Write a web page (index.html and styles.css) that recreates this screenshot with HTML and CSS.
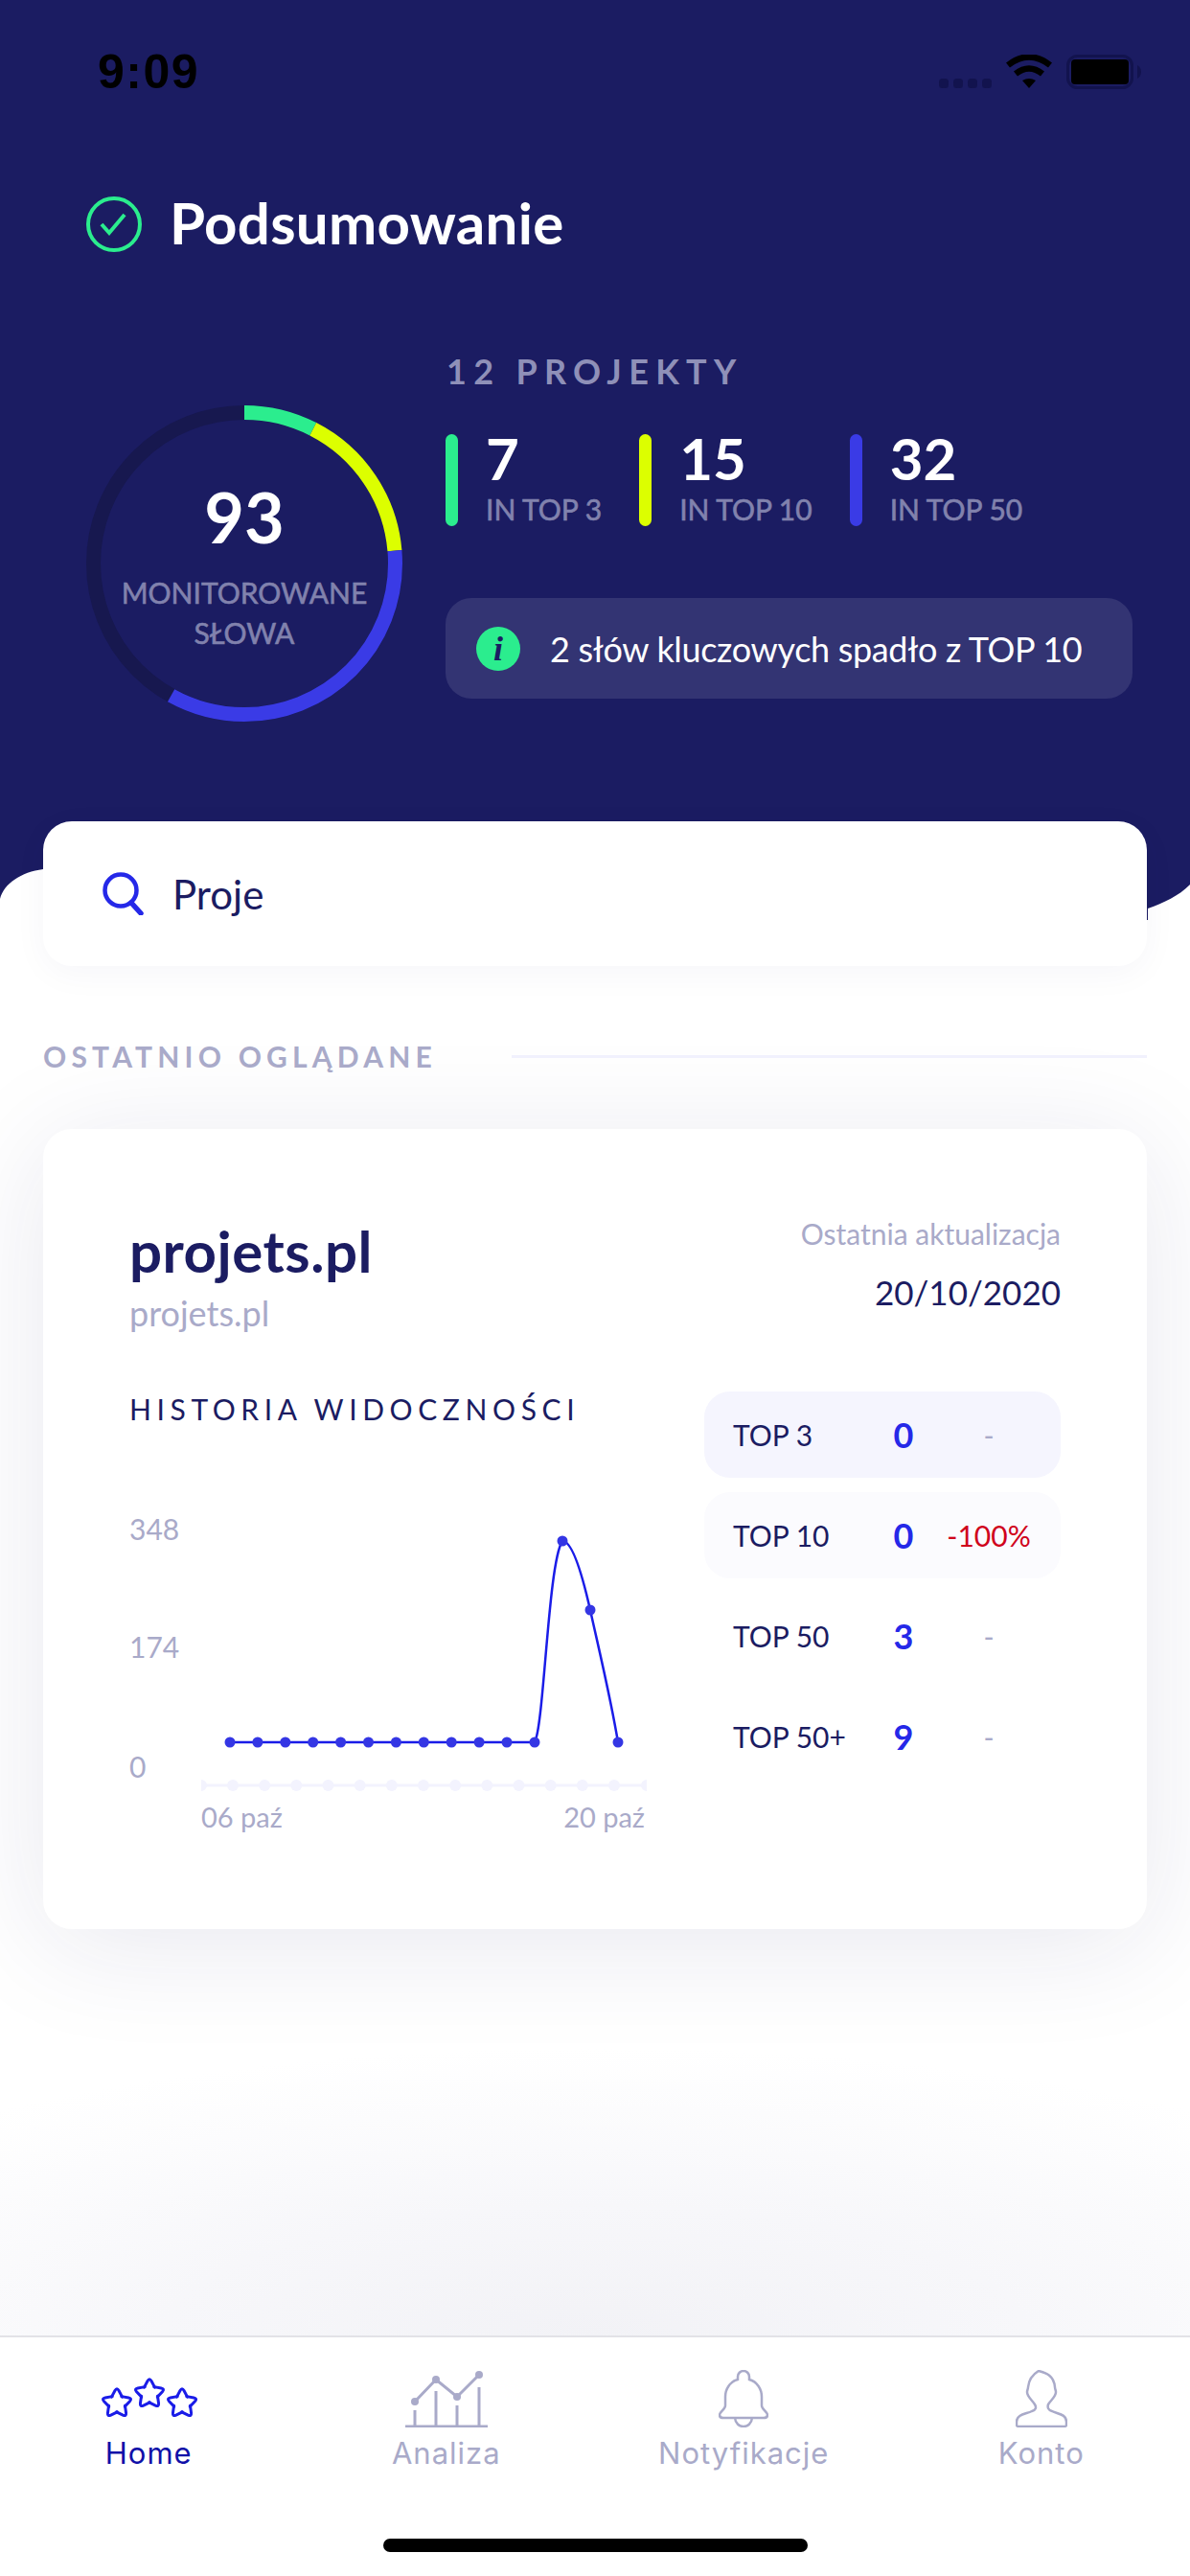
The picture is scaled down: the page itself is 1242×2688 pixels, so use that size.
FILE: index.html
```html
<!DOCTYPE html>
<html lang="pl">
<head>
<meta charset="utf-8">
<title>Podsumowanie</title>
<link rel="stylesheet" href="styles.css">
</head>
<body>
<div class="screen">
  <header class="hero">
    <div class="status">
      <span class="clock">9:09</span>
      <svg class="status-icons" width="211" height="36" viewBox="0 0 211 36">
        <g fill="#12134e">
          <rect x="0" y="25" width="10" height="10" rx="3.5"/><rect x="15" y="25" width="10" height="10" rx="3.5"/>
          <rect x="30" y="25" width="10" height="10" rx="3.5"/><rect x="45" y="25" width="10" height="10" rx="3.5"/>
        </g>
        <path d="M72 11Q94 -6 116 11" fill="none" stroke="#000" stroke-width="6.5"/>
        <path d="M80 20Q94 9 108 20" fill="none" stroke="#000" stroke-width="6.5"/>
        <path d="M87 27Q94 23 101 27L94 35Z" fill="#000"/>
        <rect x="134.500" y="1.500" width="67" height="33" rx="10" fill="none" stroke="#12134e" stroke-width="3"/>
        <rect x="138" y="5" width="60" height="26" rx="4" fill="#000"/>
        <path d="M207 11C210 13 211 15 211 18C211 21 210 23 207 25Z" fill="#12134e"/>
      </svg>
    </div>
    <div class="title-row">
      <svg class="check" width="58" height="58" viewBox="0 0 58 58">
        <circle cx="29" cy="29" r="27" fill="none" stroke="#2bed8e" stroke-width="4"/>
        <path d="M16 29L24 38L40 19" fill="none" stroke="#2bed8e" stroke-width="4"/>
      </svg>
      <h1 class="title">Podsumowanie</h1>
    </div>
    <div class="summary">
      <div class="ring">
        <svg class="ring-svg" width="330" height="330" viewBox="0 0 330 330">
          <g fill="none" stroke-width="15" transform="rotate(-90 165 165)">
            <circle class="seg-track" cx="165" cy="165" r="157.5"/>
            <circle class="seg-green" cx="165" cy="165" r="157.5" pathLength="93" stroke-dasharray="7 86"/>
            <circle class="seg-yellow" cx="165" cy="165" r="157.5" pathLength="93" stroke-dasharray="15 78" stroke-dashoffset="-7"/>
            <circle class="seg-blue" cx="165" cy="165" r="157.5" pathLength="93" stroke-dasharray="32 61" stroke-dashoffset="-22"/>
          </g>
        </svg>
        <div class="ring-text">
          <div class="ring-num">93</div>
          <div class="ring-label">MONITOROWANE<br>SŁOWA</div>
        </div>
      </div>
      <div class="projects">
        <div class="projects-head">12 PROJEKTY</div>
        <div class="stats">
          <div class="stat">
            <span class="bar bar-green"></span>
            <div><div class="stat-num">7</div><div class="stat-label">IN TOP 3</div></div>
          </div>
          <div class="stat">
            <span class="bar bar-yellow"></span>
            <div><div class="stat-num">15</div><div class="stat-label">IN TOP 10</div></div>
          </div>
          <div class="stat">
            <span class="bar bar-blue"></span>
            <div><div class="stat-num">32</div><div class="stat-label">IN TOP 50</div></div>
          </div>
        </div>
        <div class="notice">
          <span class="notice-icon">i</span>
          <span class="notice-text">2 słów kluczowych spadło z TOP 10</span>
        </div>
      </div>
    </div>
  </header>
  <svg class="wave" width="1242" height="60" viewBox="0 0 1242 60">
    <path d="M0 0H1242V23C1230 35 1215 42 1198 48V60H45V7C22 10 4 22 0 38Z" fill="#1b1c62"/>
  </svg>

  <main class="content">
    <div class="search">
      <svg class="search-icon" width="45" height="45" viewBox="0 0 45 45">
        <circle cx="21" cy="19" r="16.500" fill="none" stroke="#2528e8" stroke-width="4.500"/>
        <path d="M32 32L42 43" fill="none" stroke="#2528e8" stroke-width="5.500" stroke-linecap="round"/>
      </svg>
      <span class="search-text">Proje</span>
    </div>

    <div class="section-head">
      <span class="section-title">OSTATNIO OGLĄDANE</span>
      <span class="section-line"></span>
    </div>

    <section class="card">
      <div class="card-head">
        <div>
          <div class="project-name">projets.pl</div>
          <div class="project-url">projets.pl</div>
        </div>
        <div class="updated">
          <div class="updated-label">Ostatnia aktualizacja</div>
          <div class="updated-date">20/10/2020</div>
        </div>
      </div>
      <div class="card-body">
        <div class="history">
          <div class="history-title">HISTORIA WIDOCZNOŚCI</div>
          <svg class="chart" width="540" height="420" viewBox="0 0 540 420">
            <g class="chart-text">
              <text x="0" y="107">348</text>
              <text x="0" y="230">174</text>
              <text x="0" y="355">0</text>
              <text class="chart-date" x="75" y="407">06 paź</text>
              <text class="chart-date" x="538" y="407" text-anchor="end">20 paź</text>
            </g>
            <g fill="#f3f3fe">
              <rect x="75" y="361.500" width="465" height="3"/>
              <path d="M75 357a6 6 0 0 1 0 12zM540 357a6 6 0 0 0 0 12z"/>
              <circle cx="108" cy="363" r="6"/><circle cx="141.200" cy="363" r="6"/><circle cx="174.300" cy="363" r="6"/>
              <circle cx="207.500" cy="363" r="6"/><circle cx="240.700" cy="363" r="6"/><circle cx="273.800" cy="363" r="6"/>
              <circle cx="307" cy="363" r="6"/><circle cx="340.200" cy="363" r="6"/><circle cx="373.300" cy="363" r="6"/>
              <circle cx="406.500" cy="363" r="6"/><circle cx="439.700" cy="363" r="6"/><circle cx="472.800" cy="363" r="6"/>
              <circle cx="506" cy="363" r="6"/>
            </g>
            <path d="M105 318H423C433 300 437 130 452 108C462 108 472 140 481 180C491 225 502 270 510 318" fill="none" stroke="#1a1ce8" stroke-width="2.500"/>
            <g fill="#3436e4">
              <circle cx="105" cy="318" r="5.500"/><circle cx="133.900" cy="318" r="5.500"/><circle cx="162.800" cy="318" r="5.500"/>
              <circle cx="191.700" cy="318" r="5.500"/><circle cx="220.600" cy="318" r="5.500"/><circle cx="249.500" cy="318" r="5.500"/>
              <circle cx="278.400" cy="318" r="5.500"/><circle cx="307.300" cy="318" r="5.500"/><circle cx="336.200" cy="318" r="5.500"/>
              <circle cx="365.100" cy="318" r="5.500"/><circle cx="394" cy="318" r="5.500"/><circle cx="423" cy="318" r="5.500"/>
              <circle cx="452" cy="108" r="5.500"/><circle cx="481" cy="180" r="5.500"/><circle cx="510" cy="318" r="5.500"/>
            </g>
          </svg>
        </div>
        <div class="ranks">
          <div class="rank rank-strong"><span class="rank-name">TOP 3</span><span class="rank-val">0</span><span class="rank-diff">-</span></div>
          <div class="rank rank-soft"><span class="rank-name">TOP 10</span><span class="rank-val">0</span><span class="rank-diff rank-down">-100%</span></div>
          <div class="rank"><span class="rank-name">TOP 50</span><span class="rank-val">3</span><span class="rank-diff">-</span></div>
          <div class="rank"><span class="rank-name">TOP 50+</span><span class="rank-val">9</span><span class="rank-diff">-</span></div>
        </div>
      </div>
    </section>
  </main>

  <nav class="tabbar">
    <div class="tabs">
      <div class="tab tab-active">
        <svg class="tab-icon" width="102" height="60" viewBox="0 0 102 60">
          <defs>
            <path id="arm" d="M-5.500 -6.900L-2 -13.500Q0 -17 2 -13.500L5.500 -6.900"/>
            <g id="star">
              <use href="#arm"/><use href="#arm" transform="rotate(72)"/><use href="#arm" transform="rotate(144)"/>
              <use href="#arm" transform="rotate(216)"/><use href="#arm" transform="rotate(288)"/>
            </g>
          </defs>
          <g fill="none" stroke="#1a1ce8" stroke-width="3" stroke-linecap="round" stroke-linejoin="round">
            <use href="#star" transform="translate(18 35)"/>
            <use href="#star" transform="translate(52 25)"/>
            <use href="#star" transform="translate(86 35)"/>
          </g>
        </svg>
        <span class="tab-label">Home</span>
      </div>
      <div class="tab">
        <svg class="tab-icon" width="86" height="60" viewBox="0 0 86 60">
          <g fill="none" stroke="#a9aac9" stroke-width="3">
            <path d="M0 59H86M10 42V59M32 22V59M54 37V59M77 18V59"/>
            <path d="M10 33L32 10L54 28L77 5"/>
          </g>
          <g fill="#a9aac9">
            <circle cx="10" cy="33" r="4"/><circle cx="32" cy="10" r="4"/><circle cx="54" cy="28" r="4"/><circle cx="77" cy="5" r="4"/>
          </g>
        </svg>
        <span class="tab-label">Analiza</span>
      </div>
      <div class="tab">
        <svg class="tab-icon" width="52" height="60" viewBox="0 0 52 60">
          <path d="M20 10V7a6 6 0 0 1 12 0V10C40 12 45 20 45 28V37C45 41 51 44 51 47C51 49 49 50 47 50H5C3 50 1 49 1 47C1 44 7 41 7 37V28C7 20 12 12 20 10ZM17 50C18 62 34 62 35 50" fill="none" stroke="#a9aac9" stroke-width="2.500"/>
        </svg>
        <span class="tab-label">Notyfikacje</span>
      </div>
      <div class="tab">
        <svg class="tab-icon" width="54" height="60" viewBox="0 0 54 60">
          <path d="M24 1C31 3 40 5 41 18C41 20 42 21 42 23C42 28 37 31 34 36C33 39 34 42 38 43C44 46 53 46 53 54V57C53 59 52 59 50 59H4C2 59 1 59 1 57V54C1 46 11 46 17 43C21 42 22 39 20 36C17 31 12 28 12 23C12 21 13 20 13 18C14 8 19 4 24 1Z" fill="none" stroke="#a9aac9" stroke-width="2.500"/>
        </svg>
        <span class="tab-label">Konto</span>
      </div>
    </div>
    <div class="home-indicator"></div>
  </nav>
</div>
</body>
</html>
```

FILE: styles.css
```css
* { box-sizing: border-box; margin: 0; padding: 0; }
html, body { width: 1242px; height: 2688px; background: #fff; }
body { font-family: "Lato", "Liberation Sans", sans-serif; color: #1b1c62; overflow: hidden; }

.screen { width: 1242px; height: 2688px; display: flex; flex-direction: column; overflow: hidden; background: #fff; }

/* hero */
.hero { height: 900px; flex: none; background: #1b1c62; padding-top: 57px; color: #fff; }
.status { display: flex; justify-content: space-between; align-items: flex-start; height: 36px; padding: 0 51px 0 102px; }
.clock { font: 700 50px/36px "Liberation Sans", sans-serif; letter-spacing: 1.500px; color: #000; }
.status-icons { display: block; }

.title-row { display: flex; align-items: center; gap: 29px; height: 72px; margin-top: 105px; padding-left: 90px; }
.check { flex: none; }
.title { font-size: 60px; font-weight: 700; line-height: 68px; padding-bottom: 4px; letter-spacing: .3px; }

.summary { display: flex; align-items: flex-start; gap: 45px; margin-top: 92px; padding-left: 90px; }
.ring { display: grid; width: 330px; height: 330px; margin-top: 61px; flex: none; }
.ring-svg, .ring-text { grid-area: 1 / 1; }
.seg-track { stroke: #17184f; }
.seg-green { stroke: #2bed8e; }
.seg-yellow { stroke: #dcff00; }
.seg-blue { stroke: #3a3be6; }
.ring-text { text-align: center; padding-top: 76px; }
.ring-num { font-size: 72px; font-weight: 700; line-height: 80px; }
.ring-label { margin-top: 18px; font-size: 30px; line-height: 42px; color: #8182ad; -webkit-text-stroke: .6px #8182ad; }

.projects { width: 717px; flex: none; }
.projects-head { font-size: 36px; line-height: 50px; letter-spacing: 7.300px; font-weight: 700; color: #8f90b8; padding-left: 1px; }
.stats { display: flex; gap: 39px; margin-top: 41px; }
.stat { display: flex; gap: 29px; }
.bar { width: 13px; height: 96px; border-radius: 7px; flex: none; }
.bar-green { background: #2bed8e; }
.bar-yellow { background: #dcff00; }
.bar-blue { background: #3a3be6; }
.stat-num { font-size: 60px; font-weight: 700; line-height: 50px; }
.stat-label { font-size: 30px; line-height: 36px; margin-top: 10px; color: #8182ad; -webkit-text-stroke: .6px #8182ad; }

.notice { display: flex; align-items: center; gap: 31px; height: 105px; margin-top: 75px; padding-left: 32px; background: #333473; border-radius: 27px; }
.notice-icon { width: 46px; height: 46px; flex: none; border-radius: 50%; background: #2bed8e; color: #1b1c62; font: italic 700 36px/46px "Liberation Serif", serif; text-align: center; }
.notice-text { font-size: 36px; line-height: 44px; letter-spacing: -.33px; color: #fff; }

.wave { display: block; flex: none; }

/* content */
.content { flex: 1; padding: 0 45px; margin-top: -103px; position: relative; background: radial-gradient(ellipse 1000px 300px at 50% 100%, #f2f2f6 0%, #f7f7fa 45%, #fff 100%) no-repeat bottom / 100% 300px; }
.search { display: flex; align-items: center; gap: 30px; height: 151px; padding-left: 60px; background: #fff; border-radius: 30px; box-shadow: 0 8px 36px rgba(27, 28, 98, .04); }
.search-icon { flex: none; }
.search-text { font-size: 42px; line-height: 48px; color: #1b1c62; }

.section-head { display: flex; align-items: center; gap: 78px; margin-top: 76px; height: 36px; }
.section-title { font-size: 30px; font-weight: 700; line-height: 36px; letter-spacing: 5.200px; color: #a9aac9; white-space: nowrap; }
.section-line { flex: 1; height: 3px; background: #f1f1fd; }

.card { height: 835px; margin-top: 58px; padding: 91px 90px 0; background: #fff; border-radius: 30px; box-shadow: 0 16px 120px rgba(27, 28, 98, .1); }
.card-head { display: flex; justify-content: space-between; height: 123px; }
.project-name { font-size: 60px; font-weight: 700; line-height: 72px; letter-spacing: .5px; }
.project-url { font-size: 36px; line-height: 44px; margin-top: 7px; color: #a9aac9; }
.updated { text-align: right; }
.updated-label { font-size: 30px; line-height: 36px; color: #a9aac9; }
.updated-date { font-size: 35px; line-height: 44px; margin-top: 21px; }

.card-body { display: flex; margin-top: 60px; }
.history { width: 600px; flex: none; }
.history-title { font-size: 30px; line-height: 36px; letter-spacing: 5.600px; white-space: nowrap; }
.chart { display: block; margin-top: 12px; }
.chart-text { font: 30px "Lato", sans-serif; fill: #a9aac9; }
.chart-date { font-size: 29px; }

.ranks { display: flex; flex-direction: column; gap: 15px; width: 372px; flex: none; }
.rank { display: grid; grid-template-columns: 140px 76px 102px; align-items: center; height: 90px; padding: 0 24px 0 30px; border-radius: 27px; font-size: 30px; }
.rank-strong { background: #f5f5fe; }
.rank-soft { background: #fbfbfe; }
.rank-name { white-space: nowrap; }
.rank-val { font-size: 36px; font-weight: 700; color: #2528e8; text-align: center; }
.rank-diff { color: #a9aac9; text-align: center; }
.rank-down { color: #d0021b; }

/* tab bar */
.tabbar { height: 251px; flex: none; background: #fff; border-top: 2px solid #e2e2e7; }
.tabs { display: grid; grid-template-columns: repeat(4, 1fr); height: 210px; padding-top: 34px; }
.tab { display: flex; flex-direction: column; align-items: center; }
.tab-icon { display: block; flex: none; }
.tab-label { margin-top: 8px; font: 400 31px/38px "Inter", "Liberation Sans", sans-serif; letter-spacing: 1px; color: #a9aac9; }
.tab-active .tab-label { color: #1010a8; }
.home-indicator { width: 443px; height: 14px; margin: 0 auto; background: #000; border-radius: 7px; }
```
